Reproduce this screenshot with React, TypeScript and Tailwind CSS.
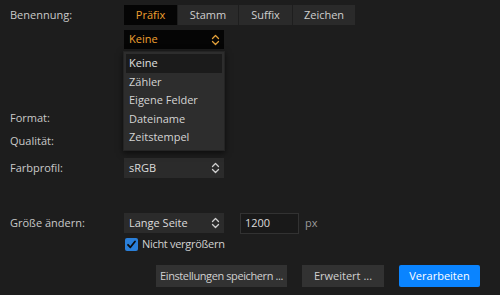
import React from 'react';

const Chevrons: React.FC<{ color: string }> = ({ color }) => (
  <svg width="9" height="12" viewBox="0 0 9 12" fill="none" stroke={color} strokeWidth="1.3" strokeLinecap="round" strokeLinejoin="round">
    <path d="M1.5 4.5 L4.5 1.5 L7.5 4.5" />
    <path d="M1.5 7.5 L4.5 10.5 L7.5 7.5" />
  </svg>
);

const Label: React.FC<{ children: React.ReactNode }> = ({ children }) => (
  <div className="w-[114px] shrink-0 pl-[10px] text-[#c9c9c9] whitespace-nowrap">{children}</div>
);

const tabs = ['Präfix', 'Stamm', 'Suffix', 'Zeichen'];
const menuItems = ['Keine', 'Zähler', 'Eigene Felder', 'Dateiname', 'Zeitstempel'];

const App: React.FC = () => {
  return (
    <div
      className="relative w-[500px] h-[295px] bg-[#1d1d1d] text-[11px] text-[#d2d2d2] overflow-hidden whitespace-nowrap"
      style={{ fontFamily: '"Open Sans", "Noto Sans", sans-serif' }}
    >
      <div className="flex flex-col pt-[5px]">
        {/* Benennung */}
        <div className="flex items-center h-[20px]">
          <Label>Benennung:</Label>
          <div className="flex h-[20px] bg-[#2a2a2a] ml-[10px]">
            {tabs.map((t, i) => (
              <div
                key={t}
                className={
                  i === 0
                    ? 'flex items-center justify-center w-[53px] bg-[#050505] text-[#f0a030]'
                    : 'flex items-center justify-center border-l border-[#1e1e1e] text-[#cfcfcf] ' +
                      (i === 1 ? 'w-[61px]' : i === 2 ? 'w-[54px]' : 'w-[63px]')
                }
              >
                {t}
              </div>
            ))}
          </div>
        </div>

        {/* Keine select */}
        <div className="flex items-center h-[19px] mt-[5px]">
          <div className="w-[124px] shrink-0" />
          <div className="flex items-center justify-between w-[100px] h-[19px] bg-[#050505] pl-[5px] pr-[4px] text-[#f0a030]">
            <span>Keine</span>
            <Chevrons color="#e3a03a" />
          </div>
        </div>

        {/* Format / Qualität */}
        <div className="flex items-center h-[23px] mt-[58px]">
          <Label>Format:</Label>
        </div>
        <div className="flex items-center h-[23px]">
          <Label>Qualität:</Label>
        </div>

        {/* Farbprofil */}
        <div className="flex items-center h-[20px] mt-[5px]">
          <Label>Farbprofil:</Label>
          <div className="flex items-center justify-between w-[100px] h-[20px] bg-[#2b2b2b] ml-[10px] pl-[5px] pr-[4px] text-[#dcdcdc]">
            <span>sRGB</span>
            <Chevrons color="#cfcfcf" />
          </div>
        </div>

        {/* Größe ändern */}
        <div className="flex items-center h-[20px] mt-[35px]">
          <Label>Größe ändern:</Label>
          <div className="flex items-center justify-between w-[100px] h-[20px] bg-[#2b2b2b] ml-[10px] pl-[5px] pr-[4px] text-[#dcdcdc]">
            <span>Lange Seite</span>
            <Chevrons color="#cfcfcf" />
          </div>
          <div className="flex items-center w-[59px] h-[21px] ml-[16px] bg-[#191919] border border-[#323232] pl-[4px] text-[#dcdcdc]">
            1200
          </div>
          <span className="ml-[6px] text-[#9a9a9a]">px</span>
        </div>

        {/* Checkbox */}
        <div className="flex items-center h-[16px] mt-[3px] pl-[125px]">
          <div className="flex items-center justify-center w-[13px] h-[13px] rounded-[2px] bg-[#2a7fd9]">
            <svg width="11" height="11" viewBox="0 0 11 11" fill="none" stroke="#0b0b0b" strokeWidth="1.8" strokeLinecap="round" strokeLinejoin="round">
              <path d="M2 5.8 L4.4 8.3 L9 2.5" />
            </svg>
          </div>
          <span className="ml-[4px] text-[#d2d2d2] tracking-[-0.3px]">Nicht vergrößern</span>
        </div>

        {/* Buttons */}
        <div className="flex items-center h-[22px] mt-[13px] pl-[156px]">
          <div className="flex items-center justify-center w-[131px] h-[22px] bg-[#323232] text-[#d0d0d0] tracking-[-0.4px]">
            Einstellungen speichern ...
          </div>
          <div className="flex items-center justify-center w-[82px] h-[22px] ml-[15px] bg-[#323232] text-[#d0d0d0]">
            Erweitert ...
          </div>
          <div className="flex items-center justify-center w-[81px] h-[22px] ml-[15px] rounded-[2px] bg-[#0a84ff] text-white">
            Verarbeiten
          </div>
        </div>
      </div>

      {/* open dropdown menu */}
      <div className="absolute left-[123px] top-[51px] w-[102px] h-[100px] bg-[#2d2d2d] border border-[#242424] shadow-[0_2px_6px_rgba(0,0,0,0.6)] pt-[2px] px-[2px]">
        {menuItems.map((m, i) => (
          <div
            key={m}
            className={
              'flex items-center h-[18.5px] pl-[3px] ' +
              (i === 0 ? 'bg-[#1b1b1b] text-[#e0e0e0]' : 'text-[#d4d4d4]')
            }
          >
            {m}
          </div>
        ))}
      </div>
    </div>
  );
};

export default App;
